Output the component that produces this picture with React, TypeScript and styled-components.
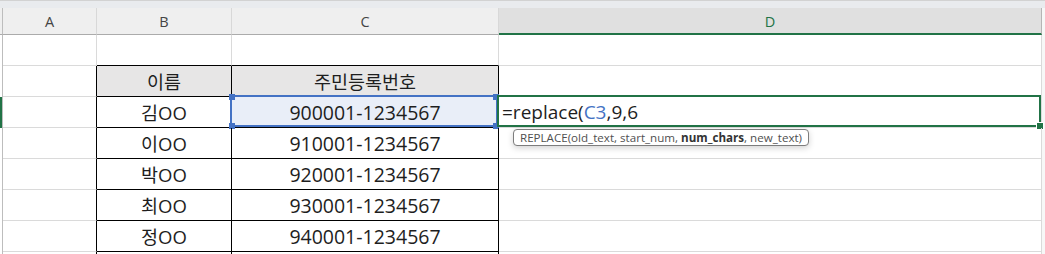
import React from 'react';
import styled, {createGlobalStyle} from "styled-components";

const GRID = '#dadada';
const GREEN = '#217346';
const BLUE = '#4472c4';
const COLUMNS = '3px 94px 135px 267px 543px 3px';

const GlobalStyle = createGlobalStyle`
    html, body {
        margin: 0;
        padding: 0;
        background: #ffffff;
        overflow: hidden;
    }
    body {
        font-family: "Open Sans", "Noto Sans CJK KR", sans-serif;
    }
`

type Line = 'grid' | 'black' | 'none';

const rows = [
    {name: '', id: '', kind: 'empty'},
    {name: '이름', id: '주민등록번호', kind: 'head'},
    {name: '김OO', id: '900001-1234567', kind: 'active'},
    {name: '이OO', id: '910001-1234567', kind: 'data'},
    {name: '박OO', id: '920001-1234567', kind: 'data'},
    {name: '최OO', id: '930001-1234567', kind: 'data'},
    {name: '정OO', id: '940001-1234567', kind: 'data'},
    {name: '', id: '', kind: 'data'},
];

export default function App() {
    return (
        <>
            <GlobalStyle/>
            <Sheet>
                <TopStrip/>
                <HeaderRow>
                    <Corner/>
                    <ColHeader>A</ColHeader>
                    <ColHeader>B</ColHeader>
                    <ColHeader>C</ColHeader>
                    <ColHeader $selected>D</ColHeader>
                    <EdgeCell/>
                </HeaderRow>
                {rows.map((row, i) => {
                    const inTable = row.kind !== 'empty';
                    const tableLine: Line = inTable ? 'black' : 'grid';
                    return (
                        <Row key={i}>
                            <RowHead $active={row.kind === 'active'}/>
                            <Cell $right={tableLine} $bottom="grid"/>
                            <Cell $right={tableLine} $bottom="black" $fill={row.kind === 'head' ? '#e7e6e6' : undefined}>
                                {row.name}
                            </Cell>
                            <Cell $right={tableLine} $bottom="black" $digits={row.kind !== 'head'}
                                  $fill={row.kind === 'head' ? '#e7e6e6' : row.kind === 'active' ? '#e9eef8' : undefined}>
                                {row.id}
                                {row.kind === 'active' && (
                                    <RefBox>
                                        <Handle $x="left" $y="top"/>
                                        <Handle $x="right" $y="top"/>
                                        <Handle $x="left" $y="bottom"/>
                                        <Handle $x="right" $y="bottom"/>
                                    </RefBox>
                                )}
                            </Cell>
                            <Cell $right="grid" $bottom="grid" $align="left">
                                {row.kind === 'active' && (
                                    <>
                                        <Formula>=replace(<Ref>C3</Ref>,9,6</Formula>
                                        <ActiveBox>
                                            <FillHandle/>
                                        </ActiveBox>
                                        <Tooltip>
                                            <span>REPLACE(old_text, start_num, <b>num_chars</b>, new_text)</span>
                                        </Tooltip>
                                    </>
                                )}
                            </Cell>
                            <EdgeCell/>
                        </Row>
                    );
                })}
            </Sheet>
        </>
    );
}

const Sheet = styled.div`
    width: 1045px;
    height: 254px;
    overflow: hidden;
    background: #ffffff;
`

const TopStrip = styled.div`
    height: 7px;
    background: #e9ebee;
    border-top: 1px solid #d2d2d2;
`

const HeaderRow = styled.div`
    display: grid;
    grid-template-columns: ${COLUMNS};
    height: 27px;
    background: #efefef;
`

const Corner = styled.div`
    border-right: 1px solid #bdbdbd;
    border-bottom: 1px solid #ababab;
`

const ColHeader = styled.div<{ $selected?: boolean }>`
    display: flex;
    align-items: center;
    justify-content: center;
    font-family: "Open Sans", sans-serif;
    font-size: 14.5px;
    color: ${p => p.$selected ? GREEN : '#444444'};
    background: ${p => p.$selected ? '#e0e0e0' : '#efefef'};
    border-right: 1px solid ${p => p.$selected ? '#b5b5b5' : '#d8d8d8'};
    border-bottom: ${p => p.$selected ? `2px solid ${GREEN}` : '1px solid #ababab'};
    box-sizing: border-box;
    height: 27px;
    padding-top: ${p => p.$selected ? '1px' : '0'};
`

const EdgeCell = styled.div`
    background: #f7f7f7;
`

const Row = styled.div`
    display: grid;
    grid-template-columns: ${COLUMNS};
    height: 31px;
`

const RowHead = styled.div<{ $active?: boolean }>`
    border-right: 1px solid #bdbdbd;
    box-shadow: ${p => p.$active ? `inset 2px 0 0 ${GREEN}` : 'none'};
`

const lineColor = (l: Line) => l === 'black' ? '#000000' : l === 'grid' ? GRID : 'transparent';

const Cell = styled.div<{ $right: Line; $bottom: Line; $fill?: string; $align?: 'left' | 'center'; $digits?: boolean }>`
    position: relative;
    box-sizing: border-box;
    display: flex;
    align-items: center;
    justify-content: ${p => p.$align === 'left' ? 'flex-start' : 'center'};
    border-right: 1px solid ${p => lineColor(p.$right)};
    border-bottom: 1px solid ${p => lineColor(p.$bottom)};
    background: ${p => p.$fill ?? 'transparent'};
    font-size: ${p => p.$digits ? '19.5px' : '18.5px'};
    color: #1e1e1e;
    white-space: nowrap;
`

const Formula = styled.span`
    padding-left: 3px;
    font-size: 19px;
    color: #1e1e1e;
`

const Ref = styled.span`
    color: ${BLUE};
`

const RefBox = styled.div`
    position: absolute;
    left: -2px;
    top: -2px;
    right: 0;
    bottom: 0;
    border: 2px solid ${BLUE};
    pointer-events: none;
`

const Handle = styled.div<{ $x: 'left' | 'right'; $y: 'top' | 'bottom' }>`
    position: absolute;
    width: 6px;
    height: 6px;
    background: ${BLUE};
    ${p => p.$x === 'left' ? 'left: -3px;' : 'right: -3px;'}
    ${p => p.$y === 'top' ? 'top: -3px;' : 'bottom: -4px;'}
`

const ActiveBox = styled.div`
    position: absolute;
    left: -2px;
    top: -2px;
    right: 0;
    bottom: 0;
    border: 2px solid ${GREEN};
    pointer-events: none;
`

const FillHandle = styled.div`
    position: absolute;
    right: -5px;
    bottom: -5px;
    width: 6px;
    height: 6px;
    background: ${GREEN};
    border: 1px solid #ffffff;
`

const Tooltip = styled.div`
    position: absolute;
    left: 14px;
    top: calc(100% + 2px);
    height: 15px;
    display: flex;
    align-items: center;
    padding: 0 6px;
    border: 1px solid #7d7d7d;
    border-radius: 4px;
    background: #ffffff;
    box-shadow: 0 2px 6px rgba(0, 0, 0, 0.18);
    font-family: "Open Sans", sans-serif;
    font-size: 11.6px;
    color: #505050;
    white-space: pre;
    z-index: 2;

    b {
        font-weight: 700;
        color: #333333;
    }
`
